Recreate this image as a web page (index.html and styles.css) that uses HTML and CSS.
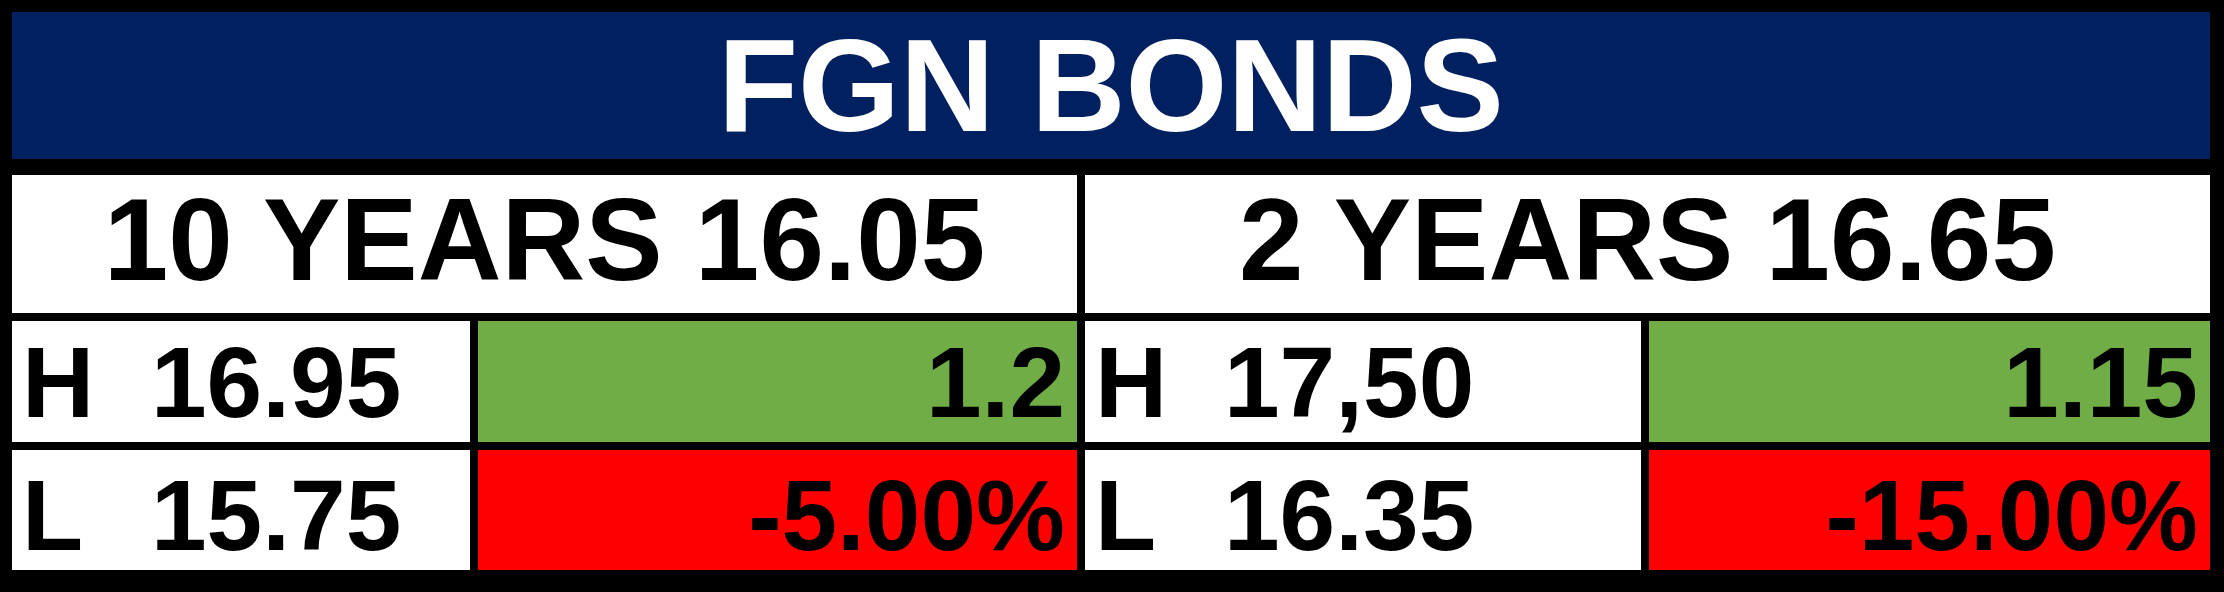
FILE: index.html
```html
<!DOCTYPE html>
<html lang="en">
<head>
    <meta charset="UTF-8">
    <meta name="viewport" content="width=device-width, initial-scale=1.0">
    <title>FGN Bonds</title>
    <link rel="stylesheet" href="styles.css">
</head>
<body>
    <div class="board">
        <div class="cell title">FGN BONDS</div>

        <div class="cell tenor tenor-left">10 YEARS 16.05</div>
        <div class="cell tenor tenor-right">2 YEARS 16.65</div>

        <div class="cell label"><span class="tag">H</span>16.95</div>
        <div class="cell value up">1.2</div>
        <div class="cell label"><span class="tag">H</span>17,50</div>
        <div class="cell value up">1.15</div>

        <div class="cell label low"><span class="tag">L</span>15.75</div>
        <div class="cell value down low">-5.00%</div>
        <div class="cell label low"><span class="tag">L</span>16.35</div>
        <div class="cell value down low">-15.00%</div>
    </div>
</body>
</html>
```

FILE: styles.css
```css
* {
    margin: 0;
    padding: 0;
    box-sizing: border-box;
}

body {
    background: #000;
    font-family: "Liberation Sans", Arial, sans-serif;
    font-weight: bold;
    color: #000;
}

.board {
    width: 2224px;
    height: 592px;
    padding: 12px 14px 14px 12px;
    display: grid;
    grid-template-columns: 458px 599px 556px 561px;
    grid-template-rows: 155px 138px 121px 120px;
    gap: 8px;
}

.cell {
    display: flex;
    align-items: center;
    background: #fff;
    white-space: pre;
    line-height: 1;
}

.title {
    grid-column: 1 / -1;
    margin-bottom: 8px;
    justify-content: center;
    background: #002060;
    color: #fff;
    font-size: 131px;
}

.tenor {
    justify-content: center;
    font-size: 116px;
    padding-bottom: 8px;
}

.tenor-left {
    grid-column: 1 / 3;
}

.tenor-right {
    grid-column: 3 / 5;
}

.label {
    font-size: 100px;
    padding-left: 10px;
}

.tag {
    width: 129px;
}

.value {
    justify-content: flex-end;
    font-size: 100px;
    padding-right: 12px;
}

.low {
    padding-top: 10px;
}

.up {
    background: #70ad47;
}

.down {
    background: #ff0000;
}
```
